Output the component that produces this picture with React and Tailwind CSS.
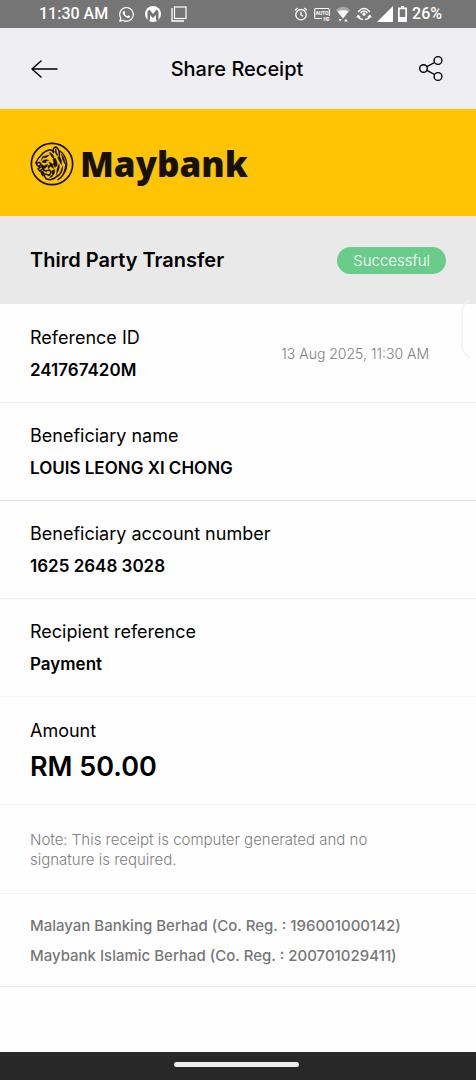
import React from 'react';
import { FaWhatsapp } from 'react-icons/fa';

const details = [
    { label: 'Reference ID', value: '241767420M', date: '13 Aug 2025, 11:30 AM', border: 'border-[#f1f1f1]' },
    { label: 'Beneficiary name', value: 'LOUIS LEONG XI CHONG', border: 'border-[#dedede]' },
    { label: 'Beneficiary account number', value: '1625 2648 3028', border: 'border-[#f1f1f1]' },
    { label: 'Recipient reference', value: 'Payment', border: 'border-[#f7f7f7]' },
];

const StatusBar = () => (
    <div className="flex h-7 items-center justify-between bg-[#757575] pl-[39px] pr-[34px] font-['Roboto',sans-serif] text-base font-medium text-white">
        <div className="flex items-center gap-[10px]">
            <span>11:30 AM</span>
            <FaWhatsapp className="size-[17px]" />
            <svg className="size-4" viewBox="0 0 16 16">
                <circle cx="8" cy="8" r="8" fill="#fff" />
                <path d="M2.500 16V5.500L4.500 3.500L8 8L11.500 3.500L13.500 5.500V16L11 14V9L8 12L5 9V14Z" fill="#757575" />
            </svg>
            <svg className="size-4" viewBox="0 0 16 16" fill="none" stroke="#fff">
                <rect x="3.500" y="1" width="11.500" height="11.500" strokeWidth="1.200" />
                <path d="M1 2V15H13" strokeWidth="1.300" />
            </svg>
        </div>
        <div className="flex items-center gap-[5px]">
            {/* alarm */}
            <svg className="mr-px size-[14px]" viewBox="0 0 14 14" fill="none" stroke="#fff" strokeWidth="1.300">
                <circle cx="7" cy="7.700" r="5.200" />
                <path d="M7 4.800V8L9.200 9.300M1 3.200L3.700 1M13 3.200L10.300 1" />
            </svg>
            {/* auto HD */}
            <svg className="mr-px h-[14px] w-4" viewBox="0 0 16 14">
                <path d="M8 11.500H1.600Q.7 11.500 .7 10.500V2.500Q.7 1.500 1.700 1.500H14.300Q15.300 1.500 15.300 2.500V9" fill="none" stroke="#fff" strokeWidth="1.100" />
                <text x="8" y="8.200" textAnchor="middle" fontSize="5" fontWeight="700" fill="#fff">AUTO</text>
                <text x="12.500" y="13.500" textAnchor="middle" fontSize="4.500" fontWeight="700" fill="#fff">HD</text>
            </svg>
            <svg className="mr-px h-4 w-[14px]" viewBox="0 0 14 16">
                <path d="M0 4Q7 -2.500 14 4L7 12.500Z" fill="#a9a9a9" />
                <path d="M1.500 5.500Q7 3.200 12.500 5.500L7 12.500Z" fill="#fff" />
                <path d="M2.500 13H5.700L4.100 15.500ZM8.300 15.500H11.500L9.900 12.500Z" fill="#fff" />
            </svg>
            <svg className="h-[14px] w-4" viewBox="0 0 16 14" fill="none" stroke="#fff">
                <path d="M2 5Q8 -2.200 14 5M4.500 6Q8 2 11.500 6" strokeWidth="1.400" />
                <circle cx="8" cy="7.200" r="1.600" fill="#fff" stroke="none" />
                <path d="M2 9.500Q3.500 12.300 7 12.500M14 9.500Q12.500 12.300 9 12.500" strokeWidth="1.500" />
                <path d="M0 10.500L2 7.500L5 10ZM16 10.500L14 7.500L11 10Z" fill="#fff" stroke="none" />
            </svg>
            <svg className="size-4" viewBox="0 0 16 16">
                <path d="M0 16L16 0V16Z" fill="#fff" />
            </svg>
            <svg className="h-4 w-[9px]" viewBox="0 0 9 16">
                <path d="M3 0H6V1.500H9V16H0V1.500H3ZM1.700 3.300V11H7.300V3.300Z" fill="#fff" fillRule="evenodd" />
            </svg>
            <span>26%</span>
        </div>
    </div>
);

const TigerLogo = () => (
    <svg className="size-11" viewBox="0 0 132 132" aria-hidden="true">
        <circle cx="66" cy="66" r="62" fill="none" stroke="#171208" strokeWidth="5" />
        <g fill="none" stroke="#171208" strokeWidth="4.500" strokeLinecap="round" strokeLinejoin="round">
            <path d="M18 62Q22 50 34 39Q44 26 60 23Q66 24 72 30" />
            <path d="M70 32Q67 18 77 15Q86 18 88 33Q90 42 85 47" />
            <path d="M77 22Q76 32 82 39" />
            <path d="M18 62L22 71L31 76L24 80L29 87L40 79" />
            <path d="M20 64L28 61L33 66L28 72" />
            <path d="M38 82L47 87L59 84L63 92L58 100L46 96L42 101L49 111L62 113Q76 110 85 99" />
            <path d="M90 27Q106 40 109 58Q113 80 98 100Q92 108 84 113" />
        </g>
        <g fill="#171208" stroke="#171208" strokeWidth="1">
            <path d="M37 44L58 38L51 46L39 48L33 56Z" />
            <path d="M35 59Q46 49 57 55L49 57L48 63L39 62Z" />
            <path d="M64 33Q72 40 73 51L65 45L58 31Z" />
            <path d="M31 66L43 71L54 66L50 75L41 82L34 76Z" />
            <path d="M57 59L68 66L71 80L61 73L55 81L53 72L60 69Z" />
            <path d="M31 87L40 88L44 96L38 103L34 97Z" />
            <path d="M65 86L75 82L73 95L65 106L58 106L67 98Z" />
            <path d="M76 48Q84 61 82 75L76 68L68 53Z" />
            <path d="M88 43Q97 53 95 69L89 60L84 49Z" />
            <path d="M94 36Q107 51 104 66L98 53Z" />
            <path d="M87 65Q91 78 83 91L79 99L81 82Z" />
            <path d="M98 71Q101 83 90 99L84 104L92 88Z" />
            <path d="M107 61Q113 77 103 91L99 96L104 80Z" />
            <path d="M74 57L78 71L75 77L69 65Z" />
        </g>
    </svg>
);

const Header = () => (
    <header className="grid h-[81px] grid-cols-[1fr_auto_1fr] items-center bg-[#efeef3] pr-[33px] pl-[31px]">
        <button type="button" aria-label="Back" className="justify-self-start">
            <svg className="h-5 w-[27px]" viewBox="0 0 27 20" fill="none" stroke="#000" strokeWidth="1.500">
                <path d="M1 10H26M10 2L1 10L10 18" strokeLinecap="round" strokeLinejoin="round" />
            </svg>
        </button>
        <h1 className="text-xl font-medium">Share Receipt</h1>
        <button type="button" aria-label="Share" className="justify-self-end">
            <svg className="h-[27px] w-6" viewBox="0 0 24 27" fill="none" stroke="#000" strokeWidth="1.400">
                <circle cx="4.500" cy="13.500" r="3.800" />
                <circle cx="19" cy="5.500" r="3.900" />
                <circle cx="19" cy="21.500" r="3.900" />
                <path d="M8 11.600L15.500 7.500M8 15.400L15.500 19.500" />
            </svg>
        </button>
    </header>
);

const App = () => {
    return (
        <div className="relative flex min-h-screen flex-col bg-[#fefefe] font-['Inter',sans-serif] text-black">
            <StatusBar />
            <Header />

            <div className="flex h-[107px] items-center gap-[6px] bg-[#ffc505] px-[30px] pt-[3px]">
                <TigerLogo />
                <span className="font-['Open_Sans',sans-serif] text-[35px] leading-[44px] font-extrabold text-[#171208]">Maybank</span>
            </div>

            <main className="flex-1">
                <div className="flex h-[88px] items-center justify-between bg-[#e9e9e9] px-[30px]">
                    <h2 className="text-xl font-semibold">Third Party Transfer</h2>
                    <span className="rounded-full bg-[#69cc8b] px-4 text-[15px] leading-[27px] font-light text-white">Successful</span>
                </div>

                <dl className="pt-px">
                    {details.map((item) => (
                        <div
                            key={item.label}
                            className={`flex items-center justify-between border-b px-[30px] pt-[17px] pb-4 leading-8 ${item.border}`}
                        >
                            <div>
                                <dt className="text-[18px] leading-8">{item.label}</dt>
                                <dd className="text-[17px] leading-8 font-semibold">{item.value}</dd>
                            </div>
                            {item.date && (
                                <time className="pr-[17px] text-[14px] font-light text-[#808080]">{item.date}</time>
                            )}
                        </div>
                    ))}
                    <div className="border-b border-[#f3f3f3] px-[30px] pt-[18px] pb-[17px]">
                        <dt className="text-[18px] leading-8">Amount</dt>
                        <dd className="text-[27px] leading-10 font-semibold">RM 50.00</dd>
                    </div>
                </dl>

                <p className="border-b border-[#f3f3f3] px-[30px] pt-[25px] pb-[23px] text-[15px] leading-5 font-light text-[#808080]">
                    Note: This receipt is computer generated and no<br />signature is required.
                </p>

                <div className="border-b border-[#e8e8e8] px-[30px] pt-[17px] pb-[15px] text-[15px] leading-[30px] font-medium text-[#777]">
                    <p>Malayan Banking Berhad (Co. Reg. : 196001000142)</p>
                    <p>Maybank Islamic Berhad (Co. Reg. : 200701029411)</p>
                </div>
            </main>

            {/* edge panel handle */}
            <svg className="absolute top-[298px] right-0 h-[62px] w-4" viewBox="0 0 16 62" fill="none" stroke="#f2f2f2" strokeWidth="2">
                <path d="M10 2Q2 6 2 14V47Q2 55 10 60" strokeOpacity=".8" />
            </svg>

            <div className="flex h-7 justify-center bg-[#282828] pt-[10px] pr-1">
                <div className="h-[5px] w-[125px] rounded-full bg-[#eee]" />
            </div>
        </div>
    );
};

export default App;
